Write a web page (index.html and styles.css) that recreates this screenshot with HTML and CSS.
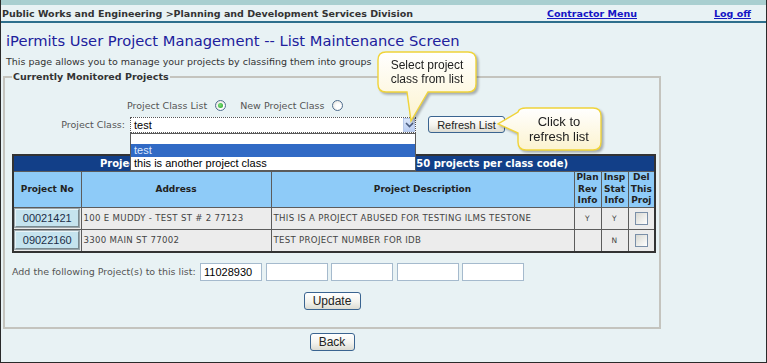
FILE: index.html
```html
<!DOCTYPE html>
<html>
<head>
<meta charset="utf-8">
<link rel="stylesheet" href="styles.css">
</head>
<body>
<div class="page">
  <div class="topstrip"></div>
  <div class="header">
    <span class="crumb">Public Works and Engineering &gt;Planning and Development Services Division</span>
    <a class="hlink" href="#">Contractor Menu</a>
    <a class="hlink" href="#">Log off</a>
  </div>
  <h1 class="title">iPermits User Project Management -- List Maintenance Screen</h1>
  <p class="intro">This page allows you to manage your projects by classifing them into groups</p>
  <div class="main">
    <fieldset class="box">
      <legend>Currently Monitored Projects</legend>
      <div class="radio-row">
        <span class="rlabel">Project Class List</span><span class="radio checked"></span>
        <span class="rlabel second">New Project Class</span><span class="radio"></span>
      </div>
      <div class="class-row">
        <label class="cls-label">Project Class:</label>
        <div class="select">
          <span class="sel-text">test</span>
          <span class="sel-arrow"><svg width="9" height="6" viewBox="0 0 9 6"><path d="M1 1 L4.5 4.5 L8 1" fill="none" stroke="#4a5d80" stroke-width="1.6"/></svg></span>
          <div class="dropdown">
            <div class="opt empty"></div>
            <div class="opt sel">test</div>
            <div class="opt">this is another project class</div>
          </div>
        </div>
        <button class="btn refresh">Refresh List</button>
      </div>
      <table class="projects">
        <colgroup>
          <col class="c-no"><col class="c-addr"><col class="c-desc"><col class="c-plan"><col class="c-insp"><col class="c-del">
        </colgroup>
        <tr class="cap"><td colspan="6">Projects Currently Monitored in this Class (Maximum of 50 projects per class code)</td></tr>
        <tr class="head">
          <th>Project No</th>
          <th>Address</th>
          <th>Project Description</th>
          <th class="narrow">Plan Rev Info</th>
          <th class="narrow">Insp Stat Info</th>
          <th class="narrow">Del This Proj</th>
        </tr>
        <tr class="row">
          <td class="no"><button class="pbtn">00021421</button></td>
          <td>100 E MUDDY - TEST ST # 2 77123</td>
          <td>THIS IS A PROJECT ABUSED FOR TESTING ILMS TESTONE</td>
          <td class="ctr">Y</td>
          <td class="ctr">Y</td>
          <td class="ctr"><span class="chk"></span></td>
        </tr>
        <tr class="row">
          <td class="no"><button class="pbtn">09022160</button></td>
          <td>3300 MAIN ST 77002</td>
          <td>TEST PROJECT NUMBER FOR IDB</td>
          <td class="ctr"></td>
          <td class="ctr">N</td>
          <td class="ctr"><span class="chk"></span></td>
        </tr>
      </table>
      <div class="add-row">
        <span class="add-label">Add the following Project(s) to this list:</span>
        <span class="inp">11028930</span>
        <span class="inp"></span>
        <span class="inp"></span>
        <span class="inp"></span>
        <span class="inp"></span>
      </div>
      <div class="update-row"><button class="btn update">Update</button></div>
    </fieldset>
    <div class="back-row"><button class="btn back">Back</button></div>
  </div>

  <svg class="callout c1" width="112" height="80" viewBox="0 0 112 80">
    <defs>
      <linearGradient id="g1" x1="0" y1="0" x2="0" y2="1">
        <stop offset="0" stop-color="#ffffff"/>
        <stop offset="1" stop-color="#fcf3cf"/>
      </linearGradient>
    </defs>
    <path d="M13 4 H95 Q103 4 103 12 V36 Q103 44 95 44 H55 L38 73 L34 44 H13 Q5 44 5 36 V12 Q5 4 13 4 Z" fill="url(#g1)" stroke="#f0d43a" stroke-width="1.4"/>
    <text x="54" y="21" text-anchor="middle" class="ctext12">Select project</text>
    <text x="54" y="35" text-anchor="middle" class="ctext12">class from list</text>
  </svg>

  <svg class="callout c2" width="116" height="52" viewBox="0 0 116 52">
    <defs>
      <linearGradient id="g2" x1="0" y1="0" x2="0" y2="1">
        <stop offset="0" stop-color="#ffffff"/>
        <stop offset="1" stop-color="#fcf3cf"/>
      </linearGradient>
    </defs>
    <path d="M32 4 H99 Q107 4 107 12 V38 Q107 46 99 46 H32 Q24 46 24 38 V29 L4 20 L24 8 Q25 4 32 4 Z" fill="url(#g2)" stroke="#f0d43a" stroke-width="1.4"/>
    <text x="65" y="22" text-anchor="middle" class="ctext13">Click to</text>
    <text x="65" y="37" text-anchor="middle" class="ctext13">refresh list</text>
  </svg>
</div>
</body>
</html>
```

FILE: styles.css
```css
html, body {
  margin: 0;
  padding: 0;
  background: #ffffff;
}

.page {
  position: relative;
  width: 767px;
  height: 363px;
  box-sizing: border-box;
  border: 1px solid #2a2a2a;
  border-top: 0;
  background: #e8f2f4;
  overflow: hidden;
  font-family: "DejaVu Sans", Verdana, sans-serif;
  color: #444;
}

.topstrip {
  height: 5px;
  background: #a9cfd0;
}

.header {
  height: 16px;
  display: grid;
  grid-template-columns: 545px 167px auto;
  align-items: center;
  padding-left: 1px;
  border-bottom: 2px solid #2e6f8c;
  font-size: 9.5px;
  font-weight: bold;
  color: #333;
  white-space: nowrap;
}

.crumb {
  font-size: 9.5px;
}

.hlink {
  color: #1414c4;
  text-decoration: underline;
}

.title {
  margin: 9px 0 0 0;
  padding-left: 5px;
  font-size: 14.7px;
  line-height: 17px;
  font-weight: normal;
  color: #20209c;
  white-space: nowrap;
}

.intro {
  margin: 7px 0 0 0;
  padding-left: 5px;
  font-size: 9.5px;
  line-height: 11px;
  color: #333;
  white-space: nowrap;
}

.main {
  margin-left: 2px;
  width: 658px;
}

.box {
  margin: 4px 0 0 0;
  padding: 0 0 17px 0;
  width: 658px;
  box-sizing: border-box;
  min-width: 0;
  border: 2px solid #c4c4be;
}

.box legend {
  margin-left: 7px;
  padding: 0 1px;
  font-size: 9.5px;
  line-height: 12px;
  font-weight: bold;
  color: #333;
}

.radio-row {
  display: flex;
  align-items: center;
  height: 14px;
  margin-top: 15px;
  padding-left: 122px;
  font-size: 9.5px;
  color: #555;
}

.rlabel.second {
  margin-left: 14px;
}

.radio {
  position: relative;
  display: inline-block;
  width: 9px;
  height: 9px;
  margin-left: 8px;
  border: 1px solid #4f6d8e;
  border-radius: 50%;
  background: radial-gradient(circle at 60% 60%, #ffffff 30%, #dedbd2 100%);
}

.radio.checked::after {
  content: "";
  position: absolute;
  left: 2px;
  top: 2px;
  width: 5px;
  height: 5px;
  border-radius: 50%;
  background: radial-gradient(circle at 40% 40%, #7ee07e, #21a121);
}

.class-row {
  display: flex;
  align-items: center;
  height: 17px;
  margin-top: 4px;
}

.cls-label {
  width: 120px;
  text-align: right;
  font-size: 9.5px;
  color: #555;
}

.select {
  position: relative;
  z-index: 3;
  display: flex;
  align-items: center;
  margin-left: 5px;
  width: 286px;
  height: 16px;
  box-sizing: border-box;
  border: 1px dotted #555;
  background: #fff;
  font-family: "Liberation Sans", Arial, sans-serif;
  font-size: 11px;
  color: #000;
}

.sel-text {
  flex: 1;
  padding-left: 3px;
}

.sel-arrow {
  display: flex;
  align-items: center;
  justify-content: center;
  width: 12px;
  height: 14px;
  box-sizing: border-box;
  border: 1px solid #b7c9ea;
  background: linear-gradient(#dbe6f9, #b9cdf2);
}

.dropdown {
  position: absolute;
  left: -1px;
  top: 15px;
  width: 286px;
  box-sizing: border-box;
  border: 1px solid #5a5a5a;
  background: #fff;
}

.opt {
  height: 13px;
  line-height: 13px;
  padding-left: 3px;
  white-space: nowrap;
}

.opt.empty {
  height: 10px;
}

.opt.sel {
  background: #316ac5;
  color: #dfe9ff;
}

.btn {
  font-family: "Liberation Sans", Arial, sans-serif;
  font-size: 12px;
  color: #222;
  border: 1px solid #3a6490;
  border-radius: 3px;
  background: linear-gradient(#ffffff, #f3f3ee 55%, #dcdcd3);
  padding: 0;
  box-sizing: border-box;
}

.refresh {
  margin-left: 12px;
  width: 77px;
  height: 17px;
  font-size: 11px;
}

.projects {
  margin: 21px 0 0 7px;
  width: 642px;
  table-layout: fixed;
  border-collapse: collapse;
  border: 2px solid #333;
}

.c-no { width: 68px; }
.c-addr { width: 190px; }
.c-desc { width: 303px; }
.c-plan { width: 27px; }
.c-insp { width: 27px; }
.c-del { width: 27px; }

.projects td, .projects th {
  border: 1px solid #5c5c5c;
  padding: 0;
}

.cap td {
  height: 15px;
  background: #123f88;
  color: #fff;
  font-size: 10px;
  font-weight: bold;
  text-align: center;
  white-space: nowrap;
  overflow: hidden;
}

.head th {
  height: 33px;
  background: #8ecbf8;
  color: #222;
  font-size: 9px;
  font-weight: bold;
  text-align: center;
}

.head th.narrow {
  line-height: 11.5px;
  font-size: 9px;
}

.row td {
  height: 21px;
  background: #ececec;
  font-size: 8.6px;
  letter-spacing: 0.3px;
  color: #444;
  padding-left: 2px;
  white-space: nowrap;
  overflow: hidden;
}

.row td.no {
  padding: 0;
  text-align: center;
}

.row td.ctr {
  text-align: center;
  padding-left: 0;
  font-size: 7.5px;
}

.pbtn {
  width: 64px;
  height: 18px;
  padding: 0;
  font-family: "Liberation Sans", Arial, sans-serif;
  font-size: 11px;
  color: #1a2e48;
  background: #c5e3ee;
  border: 1px solid;
  border-color: #e8f4f8 #7a8a90 #7a8a90 #e8f4f8;
  box-shadow: 0 0 0 1px #9aa5aa;
}

.chk {
  display: inline-block;
  width: 11px;
  height: 11px;
  vertical-align: middle;
  border: 1px solid #7a8fa8;
  background: linear-gradient(135deg, #d8d8d2, #ffffff);
}

.add-row {
  display: flex;
  align-items: center;
  margin: 10px 0 0 7px;
  height: 18px;
}

.add-label {
  width: 188px;
  font-size: 9.5px;
  color: #555;
  white-space: nowrap;
}

.inp {
  width: 62px;
  height: 18px;
  box-sizing: border-box;
  margin-right: 3.5px;
  border: 1px solid #a5bacd;
  background: #fff;
  font-family: "Liberation Sans", Arial, sans-serif;
  font-size: 11px;
  line-height: 16px;
  padding-left: 3px;
  color: #000;
}

.update-row {
  display: flex;
  justify-content: center;
  margin-top: 11px;
}

.update {
  width: 57px;
  height: 18px;
}

.back-row {
  display: flex;
  justify-content: center;
  margin-top: 4px;
}

.back {
  width: 45px;
  height: 18px;
}

.callout {
  position: absolute;
  overflow: visible;
  filter: drop-shadow(2px 2px 1px rgba(0, 0, 0, 0.28));
  z-index: 5;
}

.c1 {
  left: 372px;
  top: 48px;
}

.c2 {
  left: 493px;
  top: 104px;
}

.ctext12 {
  font-family: "Liberation Sans", Arial, sans-serif;
  font-size: 12px;
  fill: #222;
}

.ctext13 {
  font-family: "Liberation Sans", Arial, sans-serif;
  font-size: 13px;
  fill: #222;
}
```
